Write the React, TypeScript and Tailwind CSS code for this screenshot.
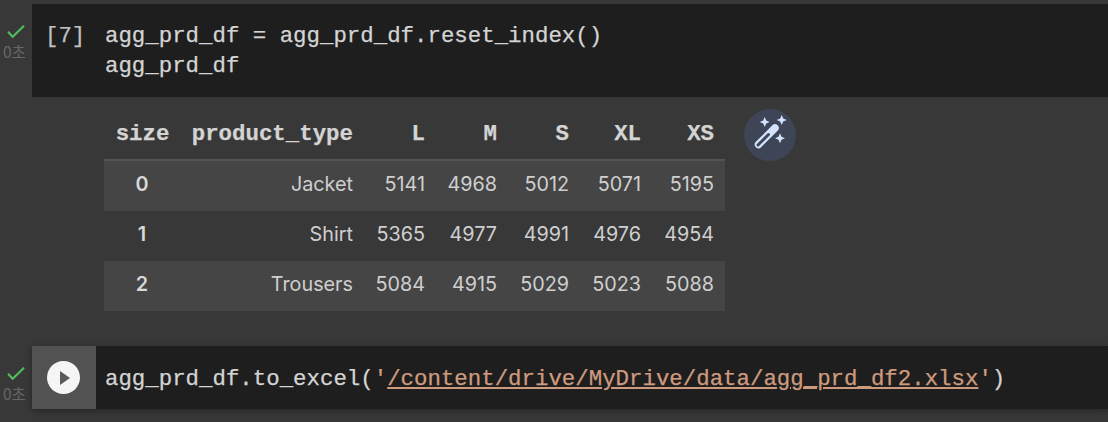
const mono = "font-['Liberation_Mono',monospace] [-webkit-text-stroke:0.25px]";
const sans = "font-['Inter','Noto_Sans_CJK_KR',sans-serif]";

const Status = () => (
  <div className="w-8 flex flex-col pt-[20px] shrink-0">
    <svg width="20" height="16" viewBox="0 0 20 16" fill="none" className="ml-[6px]">
      <path d="M2 7.7 L6.7 12.7 L18 1.7" stroke="#4fbf5f" strokeWidth="2" />
    </svg>
    <span className="font-['Noto_Sans_CJK_KR',sans-serif] text-[15.5px] leading-[18px] text-[#666] ml-[3px] mt-[2px]">0초</span>
  </div>
);

const rows = [
  ["0", "Jacket", "5141", "4968", "5012", "5071", "5195"],
  ["1", "Shirt", "5365", "4977", "4991", "4976", "4954"],
  ["2", "Trousers", "5084", "4915", "5029", "5023", "5088"],
];
const heads = ["L", "M", "S", "XL", "XS"];
const widths = ["w-[83px]", "w-[72px]", "w-[72px]", "w-[72px]", "w-[73px]"];

export default function App() {
  return (
    <div className="w-[1108px] h-[422px] overflow-hidden bg-[#383838] flex flex-col pt-[4px]">
      <div className="flex">
        <Status />
        <div className={`flex-1 h-[93px] bg-[#1e1e1e] flex text-[22.4px] leading-[30px] text-[#d4d4d4] pt-[17px] ${mono}`}>
          <span className="w-[73px] pl-[13px] text-[#c0c0c0]">[7]</span>
          <pre className={mono}>{"agg_prd_df = agg_prd_df.reset_index()\nagg_prd_df"}</pre>
        </div>
      </div>

      <div className="flex pl-[104px] mt-[12px] items-start">
        <div className="w-[621px]">
          <div className={`flex h-[50px] pt-[2px] items-center font-bold text-[22.4px] text-[#d4d4d4] ${mono}`}>
            <span className="w-[76px] text-center pl-[1px]">size</span>
            <span className="w-[173px] text-right">product_type</span>
            {heads.map((h, i) => (
              <span key={h} className={`${widths[i]} text-right pr-[11px]`}>{h}</span>
            ))}
          </div>
          <div className="border-t-[2px] border-[#555]">
            {rows.map((r, n) => (
              <div key={r[0]} className={`flex items-center pb-[3px] h-[50px] ${n === 1 ? "" : "bg-[#454545]"} text-[19.8px] text-[#cfcfcf] ${sans}`}>
                <span className="w-[76px] text-center font-semibold text-[#d8d8d8]">{r[0]}</span>
                <span className="w-[173px] text-right">{r[1]}</span>
                {r.slice(2).map((v, i) => (
                  <span key={i} className={`${widths[i]} text-right pr-[11px]`}>{v}</span>
                ))}
              </div>
            ))}
          </div>
        </div>
        <div className="ml-[19px] w-[52px] h-[52px] rounded-full bg-[#3d4556] flex items-center justify-center">
          <svg width="52" height="52" viewBox="0 0 52 52" fill="none">
            <path d="M14.5 35.5 L31 19" stroke="#d3e3fd" strokeWidth="7.5" strokeLinecap="round" />
            <path d="M14 36 L24.5 25.5" stroke="#3d4556" strokeWidth="3" strokeLinecap="round" />
            <path d="M20.7 8 L22.2 11.5 L25.7 13 L22.2 14.5 L20.7 18 L19.2 14.5 L15.7 13 L19.2 11.5 Z" fill="#d3e3fd" />
            <path d="M37.7 6 L39.2 9.5 L42.7 11 L39.2 12.5 L37.7 16 L36.2 12.5 L32.7 11 L36.2 9.5 Z" fill="#d3e3fd" />
            <path d="M36 24.3 L37.5 27.8 L41 29.3 L37.5 30.8 L36 34.3 L34.5 30.8 L31 29.3 L34.5 27.8 Z" fill="#d3e3fd" />
          </svg>
        </div>
      </div>

      <div className="flex mt-[35px]">
        <Status />
        <div className={`flex-1 h-[63px] bg-[#1e1e1e] flex items-center text-[22.4px] text-[#d4d4d4] shadow-[0_2px_6px_rgba(0,0,0,0.35)] ${mono}`}>
          <div className="w-[64px] h-full bg-[#525252] flex items-center justify-center pr-[1px]">
            <div className="w-[33px] h-[33px] rounded-full bg-[#f5f5f5] flex items-center justify-center">
              <svg width="12" height="14" viewBox="0 0 12 14" className="ml-[2px]"><path d="M1 0 L11 7 L1 14 Z" fill="#5a5a5a" /></svg>
            </div>
          </div>
          <pre className={`ml-[9px] mt-[5px] ${mono}`}>
            agg_prd_df.to_excel(<span className="text-[#ce9b7e]">'<span className="underline decoration-2 underline-offset-[2px]">/content/drive/MyDrive/data/agg_prd_df2.xlsx</span>'</span>)
          </pre>
        </div>
      </div>
    </div>
  );
}
